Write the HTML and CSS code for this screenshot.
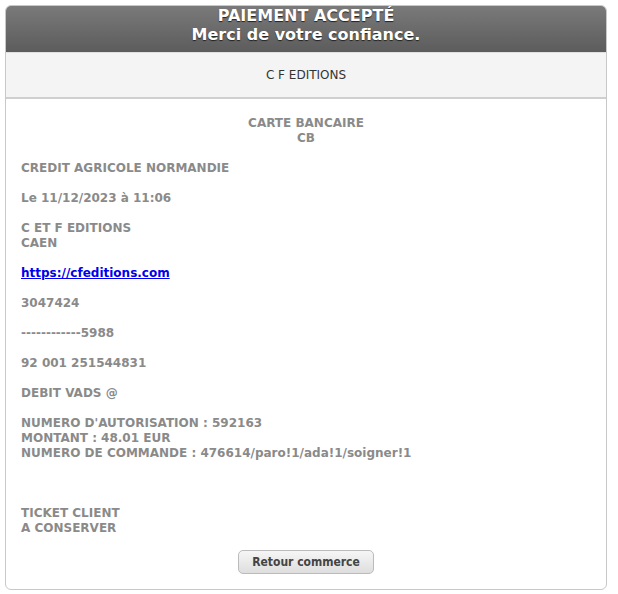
FILE: index.html
```html
<!DOCTYPE html>
<html lang="fr">
<head>
<meta charset="utf-8">
<title>Paiement accepté</title>
<link rel="stylesheet" href="styles.css">
</head>
<body>
<div class="panel">
  <div class="head">
    <div class="title">PAIEMENT ACCEPTÉ</div>
    <div class="title">Merci de votre confiance.</div>
  </div>
  <div class="merchant">C F EDITIONS</div>
  <div class="ticket">
    <div class="center">CARTE BANCAIRE<br>CB</div>
    <div class="blank"></div>
    <div>CREDIT AGRICOLE NORMANDIE</div>
    <div class="blank"></div>
    <div>Le 11/12/2023 à 11:06</div>
    <div class="blank"></div>
    <div>C ET F EDITIONS<br>CAEN</div>
    <div class="blank"></div>
    <div><a href="#" class="link">https://cfeditions.com</a></div>
    <div class="blank"></div>
    <div>3047424</div>
    <div class="blank"></div>
    <div>------------5988</div>
    <div class="blank"></div>
    <div>92 001 251544831</div>
    <div class="blank"></div>
    <div>DEBIT VADS @</div>
    <div class="blank"></div>
    <div>NUMERO D'AUTORISATION : 592163<br>MONTANT : 48.01 EUR<br>NUMERO DE COMMANDE : 476614/paro!1/ada!1/soigner!1</div>
    <div class="blank"></div>
    <div class="blank"></div>
    <div class="blank"></div>
    <div>TICKET CLIENT<br>A CONSERVER</div>
  </div>
  <div class="actions">
    <button class="btn" type="button">Retour commerce</button>
  </div>
</div>
</body>
</html>
```
FILE: styles.css
```css
html, body {
  margin: 0;
  padding: 0;
  background: #fff;
}
body {
  padding: 5px 11px 4px 5px;
  font-family: "DejaVu Sans", sans-serif;
}
.panel {
  border: 1px solid #c8c8c8;
  border-radius: 6px;
  overflow: hidden;
  background: #fff;
}
.head {
  background: linear-gradient(#7a7a7a, #5c5c5c);
  color: #fff;
  text-align: center;
  padding: 0 0 8px;
  font-weight: bold;
  font-size: 16px;
  line-height: 19px;
  text-shadow: 0 1px 1px #222;
}
.merchant {
  background: #f4f4f4;
  border-top: 1px solid #e0e0e0;
  border-bottom: 2px solid #cfcfcf;
  text-align: center;
  font-family: "DejaVu Sans", sans-serif;
  font-size: 12px;
  color: #333;
  height: 44px;
  line-height: 44px;
}
.ticket {
  padding: 17px 15px 0;
  font-weight: bold;
  font-size: 12px;
  line-height: 15px;
  color: #8a8a8a;
}
.center {
  text-align: center;
}
.blank {
  height: 15px;
}
.link {
  color: #0000ee;
  text-decoration: underline;
}
.actions {
  display: flex;
  justify-content: center;
  padding: 14px 0 15px;
}
.btn {
  font-family: "DejaVu Sans Condensed", "DejaVu Sans", sans-serif;
  font-weight: bold;
  font-size: 12px;
  color: #444;
  background: linear-gradient(#f6f6f6, #dedede);
  border: 1px solid #bbb;
  border-radius: 5px;
  width: 136px;
  height: 24px;
  padding: 0;
}
```
